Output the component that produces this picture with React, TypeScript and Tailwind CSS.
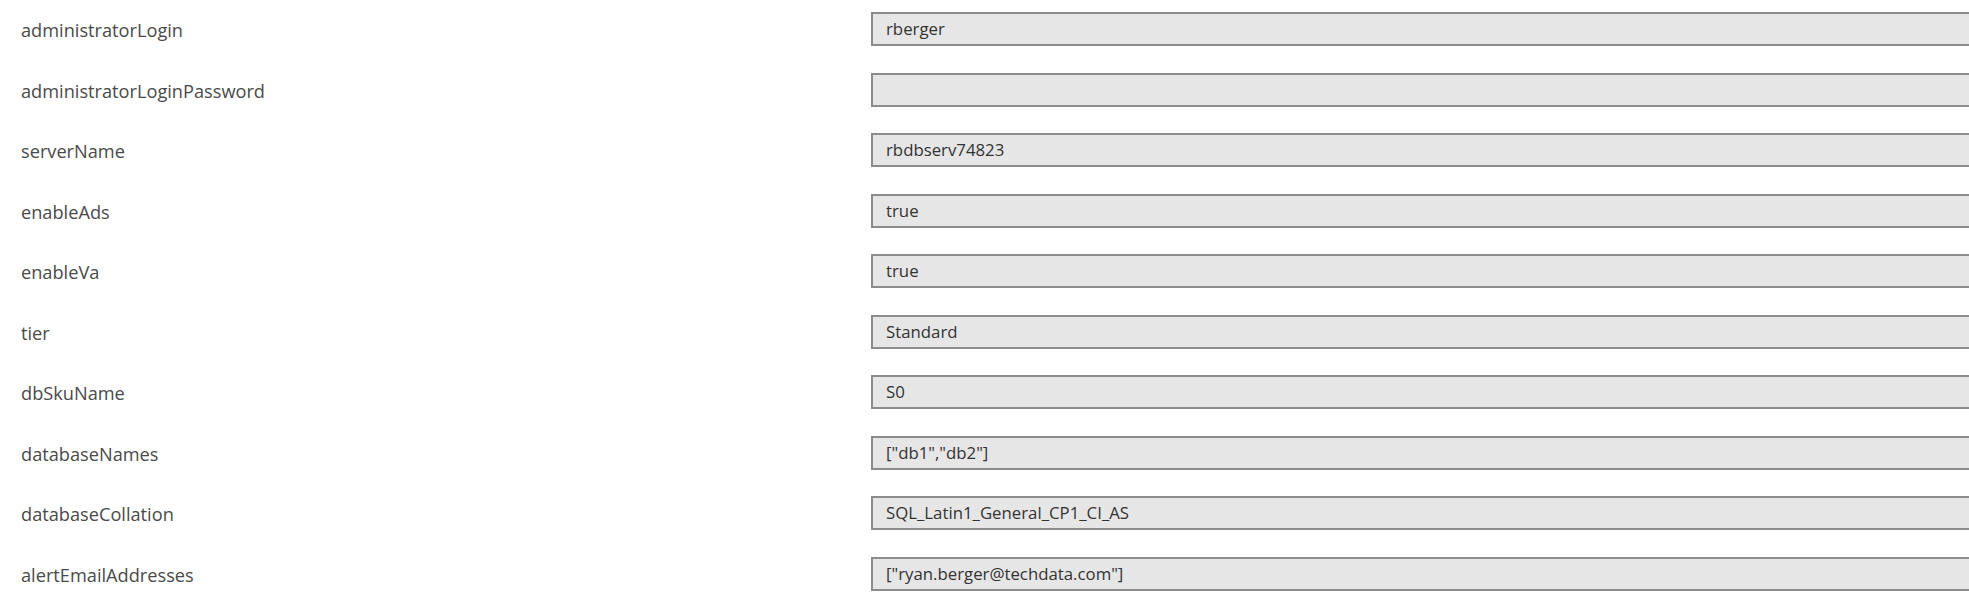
import React from 'react';

interface Param {
  name: string;
  value: string;
}

const params: Param[] = [
  { name: 'administratorLogin', value: 'rberger' },
  { name: 'administratorLoginPassword', value: '' },
  { name: 'serverName', value: 'rbdbserv74823' },
  { name: 'enableAds', value: 'true' },
  { name: 'enableVa', value: 'true' },
  { name: 'tier', value: 'Standard' },
  { name: 'dbSkuName', value: 'S0' },
  { name: 'databaseNames', value: '["db1","db2"]' },
  { name: 'databaseCollation', value: 'SQL_Latin1_General_CP1_CI_AS' },
  { name: 'alertEmailAddresses', value: '["ryan.berger@techdata.com"]' },
];

const ParamRow: React.FC<{ param: Param }> = ({ param }) => (
  <div className="flex items-center h-[34px]">
    <div className="w-[871px] shrink-0 pl-[21px] pt-[3px] text-[18.2px] text-[#4a4a4a] leading-none whitespace-nowrap">
      {param.name}
    </div>
    <div className="flex-1 h-[34px] flex items-center border-2 border-r-0 border-[#8c8c8c] bg-[#e6e6e6] pl-[13px] text-[16.8px] text-[#333333] whitespace-nowrap">
      {param.value}
    </div>
  </div>
);

export default function App() {
  return (
    <div
      className="w-full h-[603px] overflow-hidden bg-white flex flex-col gap-[26.5px] pt-[12px]"
      style={{ fontFamily: '"Open Sans", "Noto Sans", sans-serif' }}
    >
      {params.map((p) => (
        <ParamRow key={p.name} param={p} />
      ))}
    </div>
  );
}
